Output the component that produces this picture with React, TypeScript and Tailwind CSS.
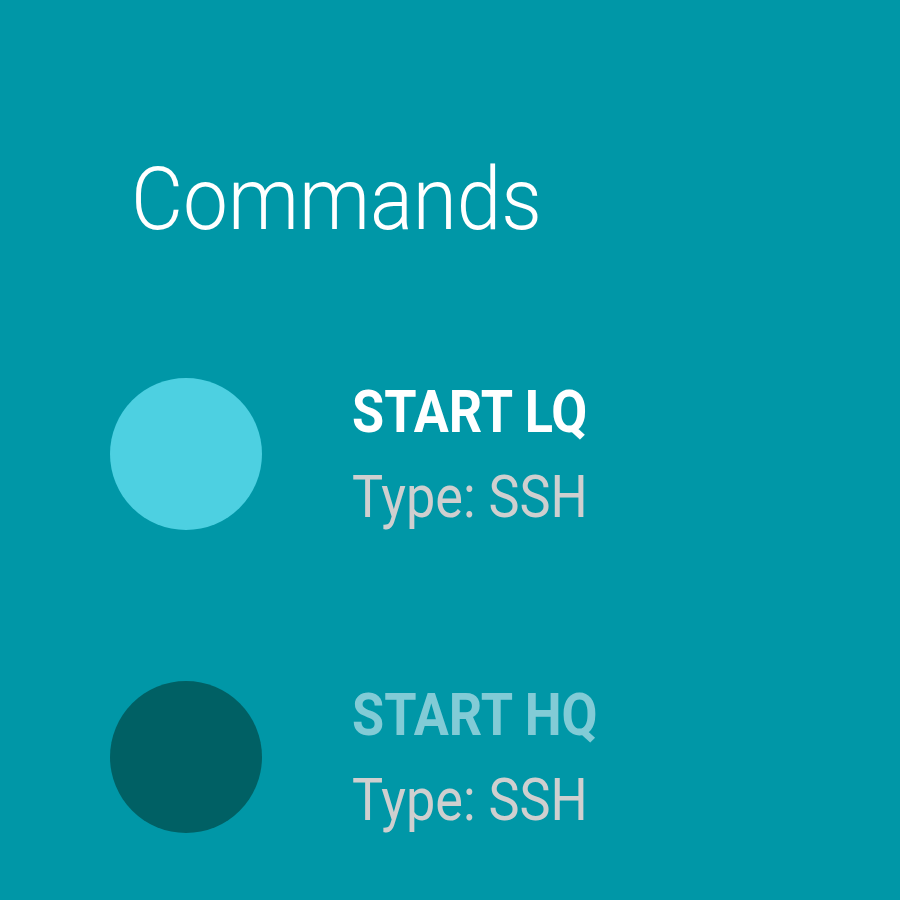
import React from "react";

const rows = [
  { title: "START LQ", circle: "bg-[#4dd0e1]", titleColor: "text-white" },
  { title: "START HQ", circle: "bg-[#006064]", titleColor: "text-[#82cbd6]" },
];

export default function App() {
  return (
    <div className="w-[900px] h-[900px] bg-[#0097a7] overflow-hidden font-['Roboto',sans-serif]">
      <div className="pt-[155px] pl-[131px]">
        <div className="text-[88px] leading-[88px] font-light text-white origin-left scale-x-[0.91] whitespace-nowrap">
          Commands
        </div>
      </div>
      <div className="mt-[135px] pl-[110px] flex flex-col gap-[151px]">
        {rows.map((r) => (
          <div key={r.title} className="flex items-center gap-[90px]">
            <div className={`w-[152px] h-[152px] rounded-full shrink-0 ${r.circle}`} />
            <div className="flex flex-col gap-[25px] origin-left scale-x-[0.87] whitespace-nowrap">
              <div className={`text-[60px] leading-[60px] font-bold ${r.titleColor}`}>{r.title}</div>
              <div className="text-[60px] leading-[60px] font-normal text-[#cfcfcf]">Type: SSH</div>
            </div>
          </div>
        ))}
      </div>
    </div>
  );
}
